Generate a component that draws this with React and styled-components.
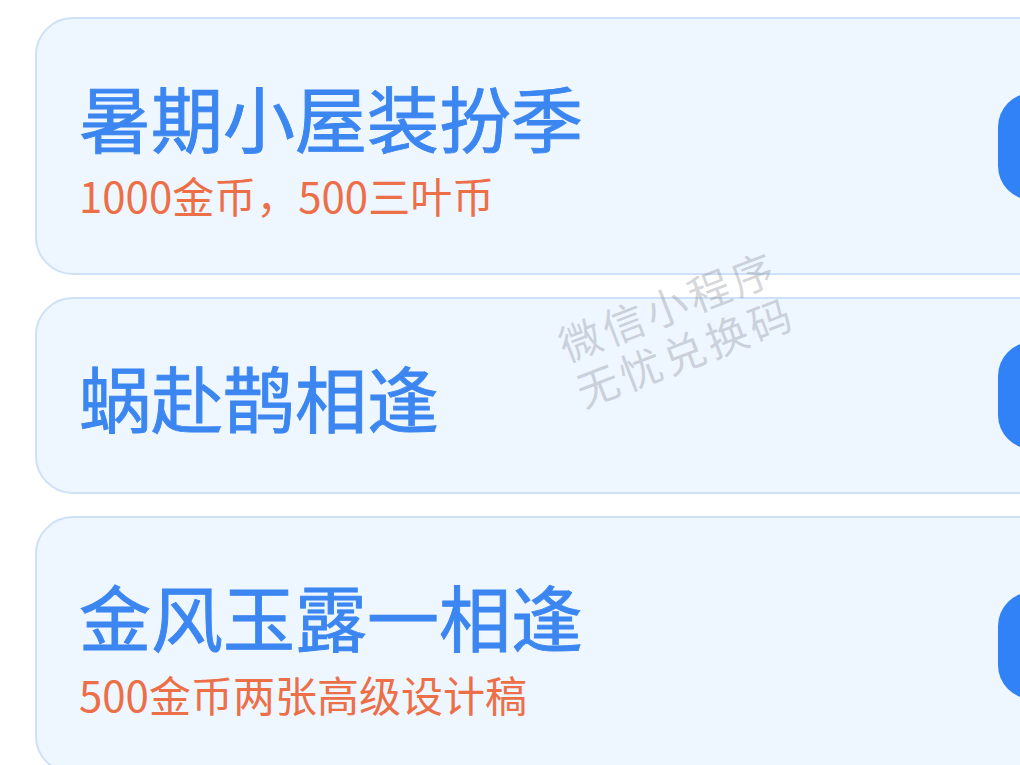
import React from "react";
import styled, { createGlobalStyle } from "styled-components";

const GlobalStyle = createGlobalStyle`
  html, body {
    margin: 0;
    padding: 0;
    background: #ffffff;
    overflow: hidden;
  }
  body {
    font-family: "Noto Sans CJK SC", "Noto Sans", sans-serif;
  }
`;

const rewards = [
  { title: "暑期小屋装扮季", desc: "1000金币，500三叶币" },
  { title: "蜗赴鹊相逢" },
  { title: "金风玉露一相逢", desc: "500金币两张高级设计稿" },
];

const App = () => {
  return (
    <Page>
      <GlobalStyle />
      <List>
        {rewards.map((item) => (
          <Card key={item.title}>
            <Info>
              <Title>{item.title}</Title>
              {item.desc && <Desc>{item.desc}</Desc>}
            </Info>
            <CopyButton type="button">复制</CopyButton>
          </Card>
        ))}
      </List>
      <Watermark>
        微信小程序
        <br />
        无忧兑换码
      </Watermark>
    </Page>
  );
};

export default App;

const Page = styled.div`
  position: relative;
  width: 1020px;
  height: 765px;
  overflow: hidden;
  background: #ffffff;
`;

const List = styled.div`
  display: flex;
  flex-direction: column;
  gap: 22px;
  padding: 17px 0 0 35px;
`;

const Card = styled.div`
  display: flex;
  align-items: center;
  width: 1240px;
  box-sizing: border-box;
  padding: 0 45px 0 42px;
  background: #eef6ff;
  border: 2px solid #cfe1f7;
  border-radius: 38px;
`;

const Info = styled.div`
  flex: 1;
  display: flex;
  flex-direction: column;
  padding: 51.5px 0;
`;

const Title = styled.div`
  font-size: 72px;
  line-height: 90px;
  font-weight: 400;
  color: #3b86f1;
  -webkit-text-stroke: 0.9px #3b86f1;
`;

const Desc = styled.div`
  margin-top: 7px;
  font-size: 42px;
  line-height: 54px;
  color: #ec6f48;
`;

const CopyButton = styled.button`
  width: 230px;
  height: 107px;
  border: none;
  border-radius: 34px;
  background: #3182f6;
  color: #ffffff;
  font-family: inherit;
  font-size: 36px;
`;

const Watermark = styled.div`
  position: absolute;
  left: 676px;
  top: 327px;
  transform: translate(-50%, -50%) rotate(-21deg);
  font-size: 42px;
  line-height: 49px;
  letter-spacing: 4px;
  text-align: center;
  white-space: nowrap;
  color: rgba(110, 115, 125, 0.28);
  pointer-events: none;
`;
